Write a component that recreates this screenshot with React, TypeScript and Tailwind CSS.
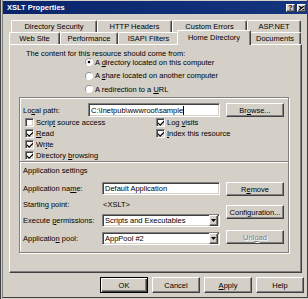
import React from 'react';

const raised =
  'border border-t-white border-l-white border-r-[#404040] border-b-[#404040] shadow-[inset_-1px_-1px_0_#808080] bg-[#d4d0c8]';
const sunken =
  'border border-t-[#808080] border-l-[#808080] border-r-white border-b-white shadow-[inset_1px_1px_0_#404040,inset_-1px_-1px_0_#d4d0c8] bg-white';

function Check({ checked }: { checked?: boolean }) {
  return (
    <span className={`w-[9px] h-[9px] shrink-0 flex items-center justify-center ${sunken}`}>
      {checked && (
        <svg width="6" height="6" viewBox="0 0 7 7">
          <path d="M0 2.5 L2.5 5 L7 0.5 L7 2.5 L2.5 7 L0 4.5Z" fill="#000" />
        </svg>
      )}
    </span>
  );
}

function Radio({ on }: { on?: boolean }) {
  return (
    <svg width="8" height="8" viewBox="0 0 12 12" className="shrink-0">
      <circle cx="6" cy="6" r="5.5" fill="#fff" />
      <path d="M2.1 9.9 A5.5 5.5 0 0 1 9.9 2.1" fill="none" stroke="#808080" strokeWidth="1.4" />
      <path d="M9.9 2.1 A5.5 5.5 0 0 1 2.1 9.9" fill="none" stroke="#fff" strokeWidth="1.4" />
      {on && <circle cx="6" cy="6" r="2" fill="#000" />}
    </svg>
  );
}

function CheckRow({ checked, children }: { checked?: boolean; children: React.ReactNode }) {
  return (
    <div className="h-[11px] flex items-center gap-[2px]">
      <Check checked={checked} />
      <span>{children}</span>
    </div>
  );
}

function Select({ value }: { value: string }) {
  return (
    <div className={`w-[118px] h-[13px] flex items-center ${sunken}`}>
      <span className="flex-1 pl-[2px] whitespace-nowrap overflow-hidden">{value}</span>
      <span className={`w-[9px] h-[11px] mr-[1px] flex items-center justify-center ${raised}`}>
        <svg width="5" height="3" viewBox="0 0 5 3">
          <path d="M0 0 H5 L2.5 3Z" fill="#000" />
        </svg>
      </span>
    </div>
  );
}

function Btn({ children, className = '', disabled }: { children: React.ReactNode; className?: string; disabled?: boolean }) {
  return (
    <div
      className={`w-[58px] flex items-center justify-center ${raised} ${className} ${
        disabled ? 'text-[#808080] [text-shadow:1px_1px_0_#fff]' : ''
      }`}
    >
      {children}
    </div>
  );
}

const tabBase =
  'flex items-center justify-center border-t border-l border-r border-t-white border-l-white border-r-[#404040] rounded-t-[2px] shadow-[inset_-1px_0_0_#808080] bg-[#d4d0c8]';

export default function App() {
  return (
    <div className="w-[308px] h-[299px] bg-[#d4d0c8] overflow-hidden font-['Liberation_Sans',Arial,sans-serif] text-[7.5px] leading-[9px] text-black flex">
      <div className="w-[2px] h-full border-l border-[#404040]" />
      <div className="w-[306px] h-[298px] border-l border-r border-b border-l-[#808080] border-r-[#404040] border-b-[#404040] flex flex-col pt-[1px]">
        {/* title bar */}
        <div className="h-[13px] bg-gradient-to-r from-[#0a246a] to-[#14357f] flex items-center pl-[4px] pr-[1px]">
          <span className="text-white font-bold flex-1">XSLT Properties</span>
          <div className="flex gap-[2px]">
            <div className={`w-[9px] h-[8px] flex items-center justify-center font-bold text-[7px] leading-[7px] ${raised}`}>?</div>
            <div className={`w-[9px] h-[8px] flex items-center justify-center ${raised}`}>
              <svg width="5" height="4" viewBox="0 0 5 4">
                <path d="M0 0 L5 4 M5 0 L0 4" stroke="#000" strokeWidth="1.2" />
              </svg>
            </div>
          </div>
        </div>

        {/* tab control */}
        <div className="ml-[6px] mt-[6px] w-[293px] flex flex-col">
          <div className="flex ml-[2px] h-[12px]">
            <div className={`${tabBase} w-[86px] h-[12px]`}>Directory Security</div>
            <div className={`${tabBase} w-[75px] h-[12px]`}>HTTP Headers</div>
            <div className={`${tabBase} w-[75px] h-[12px]`}>Custom Errors</div>
            <div className={`${tabBase} w-[54px] h-[12px]`}>ASP.NET</div>
          </div>
          <div className="flex h-[12px] items-start">
            <div className={`${tabBase} w-[51px] h-[12px]`}>Web Site</div>
            <div className={`${tabBase} w-[58px] h-[12px]`}>Performance</div>
            <div className={`${tabBase} w-[61px] h-[12px]`}>ISAPI Filters</div>
            <div className={`${tabBase} w-[74px] h-[15px] -mx-[2px] -mt-[2px] relative z-10 pb-[1px]`}>Home Directory</div>
            <div className={`${tabBase} w-[52px] h-[12px]`}>Documents</div>
          </div>

          {/* panel */}
          <div className="h-[229px] border border-t-white border-l-white border-r-[#404040] border-b-[#404040] shadow-[inset_-1px_-1px_0_#808080] flex flex-col">
            <div className="pl-[16px] pt-[3.5px] h-[12.5px] whitespace-nowrap">
              The content for this resource should come from:
            </div>
            <div className="-mt-[2px] pl-[75px] flex flex-col">
              <div className="h-[13.5px] flex items-center gap-[2px]">
                <Radio on />
                <span>
                  A <u>d</u>irectory located on this computer
                </span>
              </div>
              <div className="h-[13.5px] flex items-center gap-[2px]">
                <Radio />
                <span>
                  A <u>s</u>hare located on another computer
                </span>
              </div>
              <div className="h-[13.5px] flex items-center gap-[2px]">
                <Radio />
                <span>
                  A redirection to a <u>U</u>RL
                </span>
              </div>
            </div>

            {/* group box */}
            <div className="mt-[1px] ml-[9px] w-[270px] h-[156px] border border-[#808080] shadow-[inset_1px_1px_0_#fff,1px_1px_0_#fff] flex flex-col">
              <div className="mt-[5px] h-[14px] pl-[3px] flex items-center">
                <span className="w-[65px]">
                  Lo<u>c</u>al path:
                </span>
                <div className={`w-[132px] h-full flex items-center pl-[2px] whitespace-nowrap ${sunken}`}>
                  <span>{'C:\\Inetpub\\wwwroot\\sample'}</span>
                  <span className="w-[1px] h-[9px] bg-black" />
                </div>
                <Btn className="ml-[6px] h-full">
                  Br<u>o</u>wse...
                </Btn>
              </div>

              <div className="flex">
                <div className="w-[136px] pl-[5px] flex flex-col">
                  <CheckRow>
                    Scrip<u>t</u> source access
                  </CheckRow>
                  <CheckRow checked>
                    <u>R</u>ead
                  </CheckRow>
                  <CheckRow checked>
                    Wr<u>i</u>te
                  </CheckRow>
                  <CheckRow checked>
                    Directory <u>b</u>rowsing
                  </CheckRow>
                </div>
                <div className="flex flex-col">
                  <CheckRow checked>
                    Log <u>v</u>isits
                  </CheckRow>
                  <CheckRow checked>
                    <u>I</u>ndex this resource
                  </CheckRow>
                </div>
              </div>

              <div className="h-[2px] border-t border-t-[#808080] border-b border-b-white" />
              <div className="mt-[2.5px] pl-[3px]">Application settings</div>

              <div className="mt-[7.5px] pl-[3px] flex">
                <div className="w-[197px] flex flex-col">
                  <div className="h-[13px] flex items-center">
                    <span className="w-[79px]">
                      Application na<u>m</u>e:
                    </span>
                    <div className={`w-[118px] h-full flex items-center pl-[2px] ${sunken}`}>Default Application</div>
                  </div>
                  <div className="h-[19px] flex items-center">
                    <span className="w-[79px]">Starting point:</span>
                    <span className="pl-[1px]">{'<XSLT>'}</span>
                  </div>
                  <div className="h-[13px] flex items-center">
                    <span className="w-[79px]">
                      Execute <u>p</u>ermissions:
                    </span>
                    <Select value="Scripts and Executables" />
                  </div>
                  <div className="mt-[5px] h-[13px] flex items-center">
                    <span className="w-[79px]">
                      Applicatio<u>n</u> pool:
                    </span>
                    <Select value="AppPool #2" />
                  </div>
                </div>
                <div className="ml-[6px] flex flex-col">
                  <Btn className="h-[14px]">
                    R<u>e</u>move
                  </Btn>
                  <Btn className="mt-[9px] h-[14px]">
                    Confi<u>g</u>uration...
                  </Btn>
                  <Btn className="mt-[11px] h-[14px]" disabled>
                    Unl<u>o</u>ad
                  </Btn>
                </div>
              </div>
            </div>
          </div>
        </div>

        {/* dialog buttons */}
        <div className="mt-[4px] ml-[97px] flex gap-[4px]">
          <div className="w-[48px] h-[16px] border border-black bg-[#d4d0c8] shadow-[inset_1px_1px_0_#fff,inset_-1px_-1px_0_#404040,inset_-2px_-2px_0_#808080] flex items-center justify-center">
            OK
          </div>
          <div className={`w-[48px] h-[16px] flex items-center justify-center ${raised}`}>Cancel</div>
          <div className={`w-[48px] h-[16px] flex items-center justify-center ${raised}`}>
            <u>A</u>pply
          </div>
          <div className={`w-[48px] h-[16px] flex items-center justify-center ${raised}`}>Help</div>
        </div>
      </div>
    </div>
  );
}
